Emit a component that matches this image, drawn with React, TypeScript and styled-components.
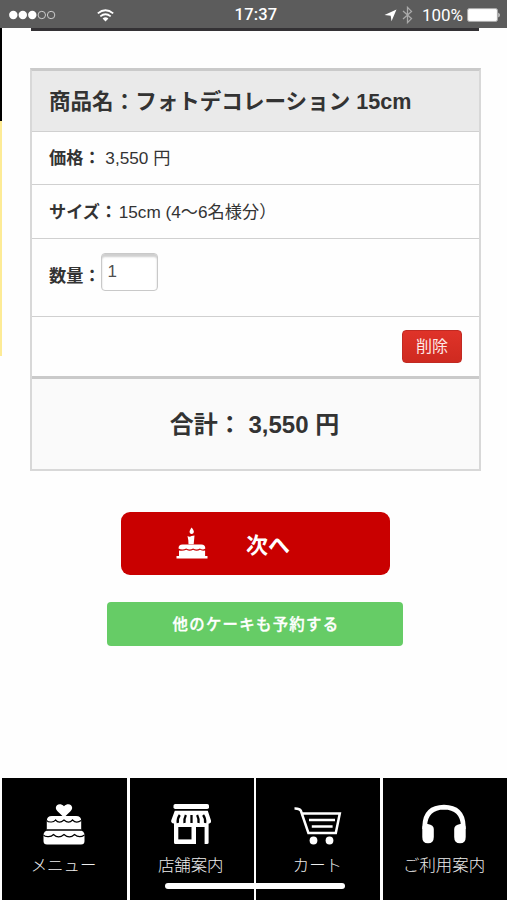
import React from "react";
import styled, { createGlobalStyle } from "styled-components";

const GlobalStyle = createGlobalStyle`
  * { box-sizing: border-box; }
  body {
    margin: 0;
    background: #fefefe;
    color: #333;
    font-family: "Liberation Sans", "Noto Sans CJK JP", sans-serif;
    overflow: hidden;
  }
`;

const Page = styled.div`
  width: 507px;
  height: 900px;
  display: flex;
  flex-direction: column;
  overflow: hidden;
`;

const StatusBar = styled.header`
  height: 28px;
  flex: none;
  display: grid;
  grid-template-columns: 1fr auto 1fr;
  align-items: center;
  padding: 2px 6px 0 9px;
  background: #5c5c5c;
  color: #fff;
  font: 500 17px/26px Roboto, sans-serif;
`;

const Signal = styled.div`
  display: flex;
  align-items: center;
  gap: 41px;
`;

const Clock = styled.span`
  padding-left: 2px;
  font-size: 16.5px;
  letter-spacing: 0.2px;
`;

const Power = styled.div`
  display: flex;
  align-items: center;
  justify-content: flex-end;
  font-weight: 400;
  font-size: 17px;
  svg { flex: none; }
`;

const Percent = styled.span`
  margin: 0 4px 0 9px;
`;

const Body = styled.div`
  flex: 1;
  display: flex;
`;

const Rail = styled.div`
  width: 2px;
  height: 328px;
  margin-right: 28px;
  background: linear-gradient(#000 0 93px, #fdeb96 93px);
`;

const Main = styled.main`
  width: 451px;
  display: flex;
  flex-direction: column;
`;

const TopRule = styled.div`
  height: 3px;
  margin: 0 2px 37px 1px;
  background: #343235;
`;

const Order = styled.section`
  height: 403px;
  border: 2px solid #d8d8d8;
  border-top: 3px solid #cacaca;
  background: #fff;
`;

const Row = styled.div<{ $h: number; $tone?: string; $line?: string }>`
  height: ${(p) => p.$h}px;
  display: flex;
  align-items: center;
  padding: 0 17px;
  background: ${(p) => p.$tone || "#fefefe"};
  border-bottom: ${(p) => p.$line || "1.5px solid #d0d0d0"};
  font-size: 17.2px;
  line-height: 24px;
  white-space: pre;
`;

const Title = styled.h1`
  margin: 2px 0 0;
  font-size: 21.55px;
  line-height: 30px;
`;

const SizeLabel = styled.b`
  margin-right: 1.5px;
`;

const QuantityRow = styled(Row)`
  align-items: flex-start;
  padding-top: 14px;
`;

const QuantityLabel = styled.b`
  margin-top: 11px;
`;

const Quantity = styled.input`
  width: 57px;
  height: 38px;
  padding: 0 7px 0 6px;
  border: 1.5px solid #c9c9c9;
  border-radius: 4px;
  background: #fff;
  box-shadow: inset 0 3px 2px #cfcfcf;
  color: #505050;
  font: 17px "Liberation Sans", sans-serif;
`;

const DeleteRow = styled(Row)`
  justify-content: flex-end;
`;

const DeleteButton = styled.button`
  width: 60px;
  height: 33px;
  padding: 0 0 3px;
  border: 1px solid #c12a22;
  border-radius: 4px;
  background: linear-gradient(#df3329, #cf2a20);
  color: #fde9e6;
  font: 16px/22px "Noto Sans CJK JP", sans-serif;
`;

const Total = styled(Row)`
  justify-content: center;
  padding: 2px 19px 0 17px;
  font-size: 24px;
  font-weight: 700;
`;

const Actions = styled.div`
  display: flex;
  flex-direction: column;
  align-items: center;
  gap: 27px;
  padding-top: 41px;
`;

const NextButton = styled.button`
  width: 269px;
  height: 63px;
  display: flex;
  align-items: center;
  gap: 38px;
  padding: 0 0 2px 55px;
  border: 0;
  border-radius: 9px;
  background: #c90000;
  color: #fff;
  font: 700 22px/30px "Noto Sans CJK JP", sans-serif;
`;

const MoreButton = styled.button`
  width: 296px;
  height: 44px;
  margin-right: 1px;
  padding: 0 0 2px 2px;
  border: 0;
  border-radius: 4px;
  background: #66cc66;
  color: #fff;
  font: 500 15.4px/22px "Noto Sans CJK JP", sans-serif;
  letter-spacing: 1.3px;
  -webkit-text-stroke: 0.35px #fff;
`;

const Nav = styled.nav`
  position: relative;
  flex: none;
  height: 122px;
  display: grid;
  grid-template-columns: 125px 124px 124px 124px;
  gap: 2.7px;
  padding-left: 2px;
`;

const NavItem = styled.a`
  display: flex;
  flex-direction: column;
  align-items: center;
  padding: 24px 2px 0 0;
  background: #000;
  color: #eee;
  font: 300 16.4px/24px "Noto Sans CJK JP", sans-serif;
  white-space: nowrap;
  svg { margin-bottom: 6px; }
`;

const HomeIndicator = styled.div`
  position: absolute;
  left: 165px;
  top: 105px;
  width: 180px;
  height: 6px;
  border-radius: 3px;
  background: #fff;
`;

const SignalDots = () => (
  <svg width="47" height="10" viewBox="0 0 47 10">
    {[4.3, 13.8, 23.3].map((x) => <circle key={x} cx={x} cy="5" r="4.2" fill="#fff" />)}
    {[32.8, 42.1].map((x) => <circle key={x} cx={x} cy="5" r="3.7" fill="none" stroke="#ccc" />)}
  </svg>
);

const Wifi = () => (
  <svg width="17" height="13" viewBox="0 0 17 13" fill="none" stroke="#fff" strokeWidth="1.8">
    <path d="M.8 4.4Q8.5-2 16.2 4.4M3.3 7.4Q8.5 3.2 13.7 7.4" />
    <path d="M5.6 9.4Q8.5 7 11.4 9.4L8.5 12.6Z" fill="#fff" stroke="none" />
  </svg>
);

const LocationArrow = () => (
  <svg width="18" height="13" viewBox="0 0 18 13"><path d="M12.5.5 7.5 12.2 6.7 6.7.5 6Z" fill="#fff" /></svg>
);

const Bluetooth = () => (
  <svg width="11" height="18" viewBox="0 0 11 18" fill="none" stroke="#aaa" strokeWidth="1.3">
    <path d="m1 5 8.5 7.6-4 4V1.4l4 4L1 13" />
  </svg>
);

const Battery = () => (
  <svg width="34" height="14" viewBox="0 0 34 14">
    <rect x=".5" y=".5" width="30" height="13" rx="2" fill="#eee" stroke="#aaa" />
    <rect x="1.5" y="1.5" width="28" height="11" rx="1" fill="#fff" />
    <path d="M31.5 4.4Q33.8 7 31.5 9.6Z" fill="#fff" />
  </svg>
);

const CandleCake = () => (
  <svg width="32" height="32" viewBox="0 0 32 32" fill="#fff">
    <path d="M15.6.5C18.6 4 18.6 6.4 15.6 7C12.8 6.4 13 4 15.6.5Z" />
    <path d="M11.5 9q2.2 1.6 4 0l3-.4-.8 8.7h-5.2l-.2-4Z" />
    <path d="M2.5 21.5q0-3.9 4-3.9h18.8q4 0 4 4-2.4 1.9-5.4-.1-3.4 2.2-6.8 0-3.4 2.2-6.9 0-3.8 2-7.7 0Z" />
    <path d="M3 23.5q4 .7 7.4-.7 3.2 1.7 6.7 0 3.7 1.7 7 0 2.5 1.2 5 .7v5.5H31.5v2.5H.5V29H3Z" />
  </svg>
);

const HeartCake = () => (
  <svg width="42" height="44" viewBox="0 0 42 44" fill="#fff">
    <path d="m21 15.5-6.5-6.2C9.8 4.5 16-.8 21 4.2c5-5 11.2.3 6.5 5.1Z" />
    <path d="M3.8 28V19q0-5 5-5h24.4q5 0 5 5v9Z" />
    <path d="M.5 39V33.5q0-5 5-5h31q5 0 5 5V39q0 3.5-3.5 3.5H4Q.5 42.5.5 39Z" />
    <path d="M3.8 18.5q.9 1.7 4.7 1.5 2.5 0 4-2 3.8 4.2 8.5 0 4.7 4.2 8.5 0 3.8 4 8.7.5M.5 33q1.2 1.8 5 1.6 3.2 0 5-2.1 5 4.8 10.5 0 5.5 4.8 10.5 0 4.7 4.2 10 .5M3.5 27.9h35" fill="none" stroke="#000" strokeWidth="1.2" />
  </svg>
);

const Shop = () => (
  <svg width="42" height="44" viewBox="0 0 42 44">
    <rect x="3.5" y="2" width="35.5" height="5" rx="1.8" fill="#fff" />
    <path d="M4.8 8.8h33L41 18.5q.5 2.8-2.4 3.2v19q0 1.3-1.6 1.3h-2.4V25H26v17H5.4Q4 42 4 40.5v-19Q.7 21 1.2 18.5Z" fill="#fff" />
    <path d="M8.3 25h13.2v12.4H8.3Z" />
    <path d="M9.8 13q-2.7 3.5-2 8M15.9 13q-2 3.8-1.4 8M21.5 13v8M27.1 13q2 3.8 1.4 8M33.1 13q2.7 3.5 2 8" fill="none" stroke="#000" strokeWidth="2.3" />
  </svg>
);

const Cart = () => (
  <svg width="49" height="44" viewBox="0 0 49 44" fill="none" stroke="#fff" strokeWidth="2.5">
    <path d="M1.5 6.4q5-.2 6.3 2.2L15.4 31h27.4l4-19.5H8.8M16 18h26M18.8 24.4h20.8" />
    <circle cx="20.5" cy="38.5" r="3.9" fill="#fff" stroke="none" />
    <circle cx="36.5" cy="38.5" r="3.9" fill="#fff" stroke="none" />
  </svg>
);

const Headphones = () => (
  <svg width="46" height="44" viewBox="0 0 46 44">
    <path d="M3.7 27v-3Q4.5 5.5 23 5.2 41.5 5.5 42.3 24v3" fill="none" stroke="#fff" strokeWidth="4.7" />
    <path d="M1.3 26q0-4 5-4h.5q6 1 6 5v8q0 6.3-5.8 6.3T1.3 35ZM44.7 26q0-4-5-4h-.5q-6 1-6 5v8q0 6.3 5.8 6.3t5.7-6.3Z" fill="#fff" />
  </svg>
);

const links = [
  { label: "メニュー", icon: <HeartCake /> },
  { label: "店舗案内", icon: <Shop /> },
  { label: "カート", icon: <Cart /> },
  { label: "ご利用案内", icon: <Headphones /> },
];

export default function App() {
  return (
    <Page>
      <GlobalStyle />
      <StatusBar>
        <Signal><SignalDots /><Wifi /></Signal>
        <Clock>17:37</Clock>
        <Power><LocationArrow /><Bluetooth /><Percent>100%</Percent><Battery /></Power>
      </StatusBar>
      <Body>
        <Rail />
        <Main>
          <TopRule />
          <Order>
            <Row $h={61} $tone="#eaeaea"><Title>商品名：フォトデコレーション 15cm</Title></Row>
            <Row $h={53}><b>価格：</b> 3,550 円</Row>
            <Row $h={54}><SizeLabel>サイズ：</SizeLabel>15cm (4〜6名様分）</Row>
            <QuantityRow $h={78}><QuantityLabel>数量：</QuantityLabel><Quantity defaultValue="1" aria-label="数量" /></QuantityRow>
            <DeleteRow $h={62} $line="3px solid #cacaca"><DeleteButton>削除</DeleteButton></DeleteRow>
            <Total $h={90} $tone="#fafafa" $line="none">合計： 3,550 円</Total>
          </Order>
          <Actions>
            <NextButton><CandleCake />次へ</NextButton>
            <MoreButton>他のケーキも予約する</MoreButton>
          </Actions>
        </Main>
      </Body>
      <Nav>
        {links.map((link) => <NavItem key={link.label}>{link.icon}{link.label}</NavItem>)}
        <HomeIndicator />
      </Nav>
    </Page>
  );
}
